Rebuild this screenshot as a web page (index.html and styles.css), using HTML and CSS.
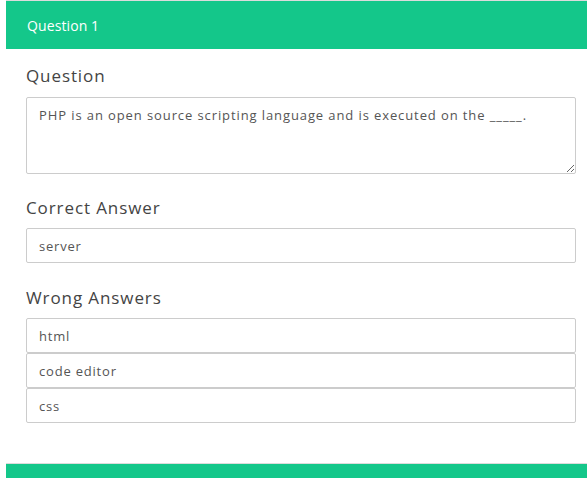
FILE: index.html
```html
<!DOCTYPE html>
<html>
<head>
<meta charset="utf-8">
<link rel="stylesheet" href="styles.css">
</head>
<body>
<div class="card">
  <div class="card-header">Question 1</div>
  <div class="card-body">
    <label class="field-label">Question</label>
    <textarea class="question-input">PHP is an open source scripting language and is executed on the _____.</textarea>
    <label class="field-label spaced">Correct Answer</label>
    <input class="text-input" type="text" value="server">
    <label class="field-label spaced wide">Wrong Answers</label>
    <div class="answer-list">
      <input class="text-input" type="text" value="html">
      <input class="text-input" type="text" value="code editor">
      <input class="text-input" type="text" value="css">
    </div>
  </div>
</div>
<div class="card next">
  <div class="card-header"></div>
</div>
</body>
</html>
```
FILE: styles.css
```css
html, body {
  margin: 0;
  padding: 0;
  overflow: hidden;
  background: #fff;
}
body {
  font-family: "Open Sans", "Liberation Sans", sans-serif;
  color: #444;
}
.card {
  margin-left: 6px;
  width: 600px;
  border-top: 1px solid #dcdcdc;
}
.card-header {
  background: #14c78a;
  height: 46px;
  padding-top: 2px;
  color: #fff;
  font-size: 14px;
  line-height: 46px;
  padding-left: 21px;
  letter-spacing: 0.1px;
}
.card-body {
  display: flex;
  flex-direction: column;
  padding: 15px 0 40px 20px;
  width: 550px;
}
.field-label {
  font-size: 17px;
  line-height: 24px;
  color: #444;
  margin-bottom: 8px;
  letter-spacing: 0.9px;
}
.field-label:first-child {
  margin-bottom: 9px;
}
.spaced {
  margin-top: 22px;
}
.wide {
  margin-top: 23px;
}
.question-input {
  font-family: inherit;
  font-size: 13px;
  color: #555;
  height: 77px;
  box-sizing: border-box;
  border: 1px solid #cccccc;
  border-radius: 2px;
  padding: 8px 12px;
  resize: vertical;
  letter-spacing: 0.9px;
  line-height: 18px;
}
.text-input {
  font-family: inherit;
  font-size: 13px;
  color: #555;
  height: 35px;
  box-sizing: border-box;
  border: 1px solid #cccccc;
  border-radius: 2px;
  padding: 0 12px;
  width: 100%;
  letter-spacing: 0.8px;
}
.answer-list {
  display: flex;
  flex-direction: column;
}
.next .card-header {
  height: 20px;
}
```
